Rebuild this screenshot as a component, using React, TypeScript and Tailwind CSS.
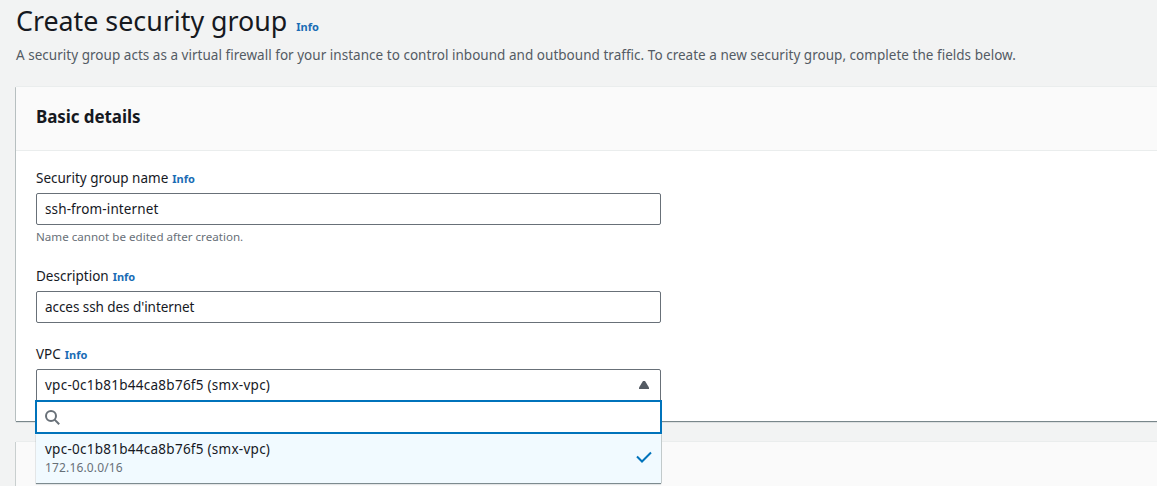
import type { ReactNode } from "react";

function Info() {
  return <a className="text-[11px] font-bold text-[#1a6cb5]">Info</a>;
}

function Label({ children }: { children: ReactNode }) {
  return (
    <div className="flex h-5 items-baseline gap-1 text-[13.5px] leading-5 whitespace-nowrap text-[#16191f]">
      <span>{children}</span>
      <Info />
    </div>
  );
}

function TextField({ children }: { children: ReactNode }) {
  return (
    <div className="mt-[5px] flex h-8 w-[625px] items-center rounded-[2px] border border-[#687078] bg-white px-2 pt-px text-[13.5px] whitespace-nowrap text-[#16191f]">
      {children}
    </div>
  );
}

function Dropdown() {
  return (
    <div className="absolute top-[30px] -left-[2px] w-[627px]">
      <div className="flex h-[34px] items-center border-2 border-[#0073bb] bg-white pl-2">
        <svg width="15" height="15" viewBox="0 0 15 15" fill="none" stroke="#687078" strokeWidth="2">
          <circle cx="6" cy="6" r="5" />
          <path d="M9.6 9.6 14.2 14.2" />
        </svg>
      </div>
      <div className="mx-px flex h-[49px] items-start justify-between bg-[#f1faff] px-[9px] pt-[5px] shadow-[0_1px_1px_0_rgba(0,28,36,0.5),1px_0_0_0_#d5dbdb]">
        <div className="flex flex-col whitespace-nowrap">
          <span className="text-[13.5px] leading-5 tracking-[0.26px] text-[#16191f]">vpc-0c1b81b44ca8b76f5 (smx-vpc)</span>
          <span className="mt-px text-[12px] leading-4 tracking-[0.15px] text-[#687078]">172.16.0.0/16</span>
        </div>
        <svg className="mt-[10px]" width="16" height="16" viewBox="0 0 16 16" fill="none" stroke="#0073bb" strokeWidth="2">
          <path d="M1 7.5 6 12.5 15 3.5" />
        </svg>
      </div>
    </div>
  );
}

export default function App() {
  return (
    <div className="h-[486px] w-[1157px] overflow-hidden bg-[#f2f3f3] pl-4 font-['Noto_Sans','Open_Sans',sans-serif]">
      <header className="h-[87px] whitespace-nowrap">
        <div className="flex h-[42px] items-baseline gap-[9px] leading-[42px]">
          <h1 className="text-[26.8px] text-[#16191f]">Create security group</h1>
          <Info />
        </div>
        <p className="mt-[3px] text-[13.5px] leading-5 tracking-[0.028px] text-[#545b64]">
          A security group acts as a virtual firewall for your instance to control inbound and outbound traffic. To create a new security group, complete the fields below.
        </p>
      </header>

      <section className="h-[334px] bg-white shadow-[0_1px_1px_0_rgba(0,28,36,0.5),-1px_0_0_0_#c9cfcf,0_-1px_0_0_#eaeded]">
        <div className="flex h-16 items-center border-b border-[#eaeded] bg-[#fafafa] pb-[3px] pl-5">
          <h2 className="text-[17px] leading-5 font-bold tracking-[-0.08px] text-[#16191f]">Basic details</h2>
        </div>
        <div className="pt-[17px] pl-5">
          <div className="h-[98px]">
            <Label>Security group name</Label>
            <TextField>
              <span className="tracking-[0.12px]">ssh-from-internet</span>
            </TextField>
            <p className="mt-1 text-[11.6px] leading-4 text-[#687078]">Name cannot be edited after creation.</p>
          </div>
          <div className="h-[78px]">
            <Label>Description</Label>
            <TextField>
              <span className="tracking-[-0.06px]">acces ssh des d'internet</span>
            </TextField>
          </div>
          <Label>VPC</Label>
          <div className="relative mt-[5px] flex h-8 w-[625px] items-center justify-between rounded-t-[2px] border border-[#687078] bg-white pr-[11px] pl-2 text-[13.5px] whitespace-nowrap text-[#16191f]">
            <span className="pt-px tracking-[0.26px]">vpc-0c1b81b44ca8b76f5 (smx-vpc)</span>
            <svg width="10" height="8" viewBox="0 0 10 8" fill="#545b64">
              <path d="M4 0H6L10 6.5V8H0V6.5z" />
            </svg>
            <Dropdown />
          </div>
        </div>
      </section>

      <section className="mt-[21px] h-20 bg-[#fafafa] shadow-[-1px_0_0_0_#c9cfcf,0_-1px_0_0_#eaeded]" />
    </div>
  );
}
